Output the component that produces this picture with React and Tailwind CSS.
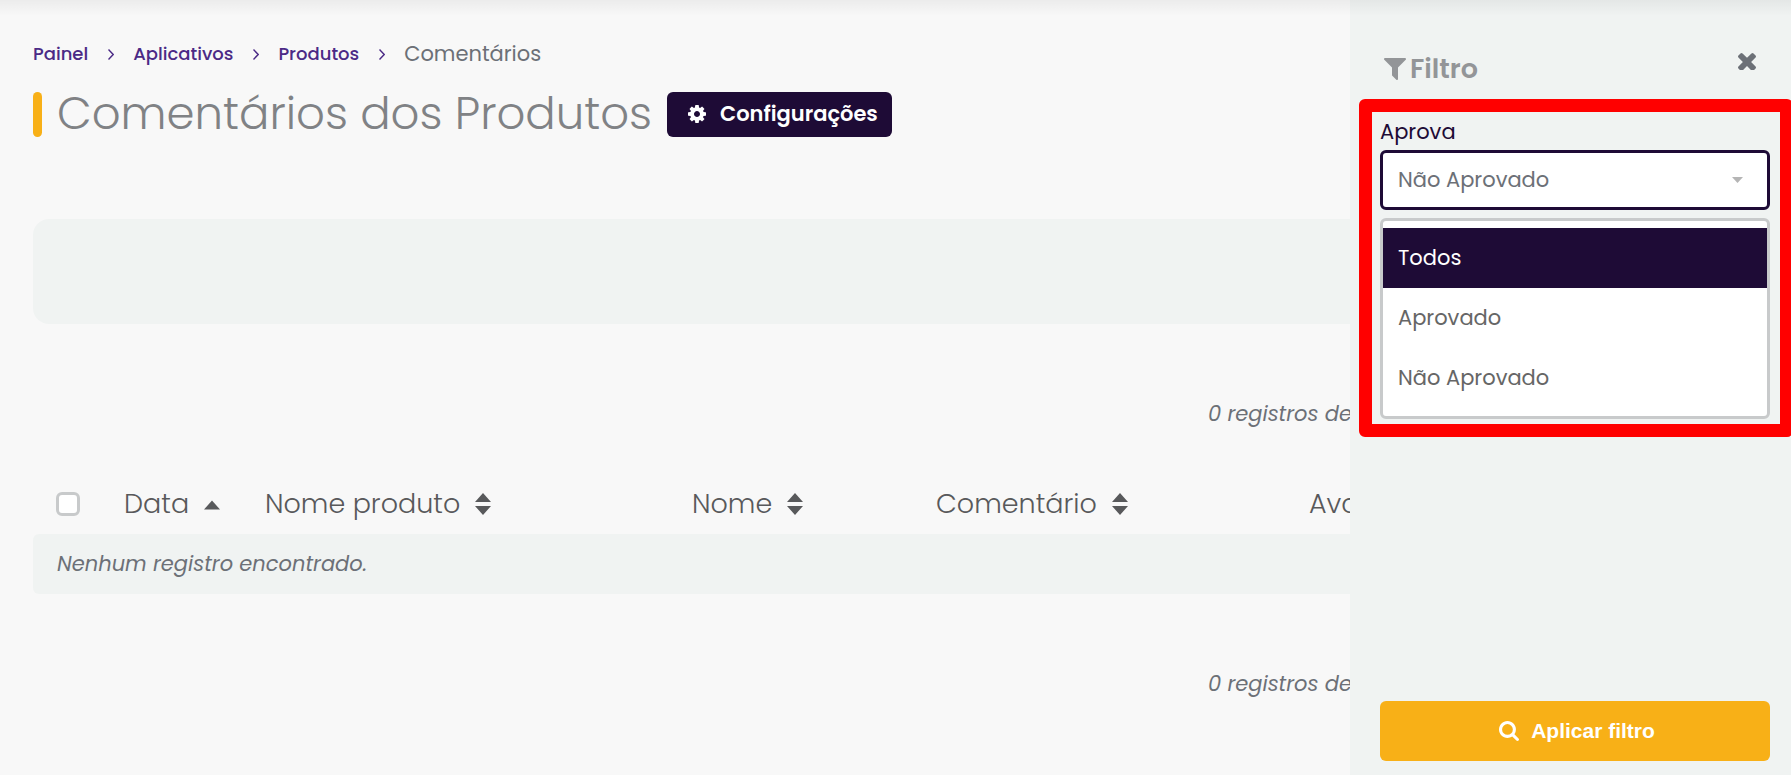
const PATHS = {
  cog: "M1152 896q0-106-75-181t-181-75-181 75-75 181 75 181 181 75 181-75 75-181zm512-109v222q0 12-8 23t-20 13l-185 28q-19 54-39 91 35 50 107 138 10 12 10 25t-9 23q-27 37-99 108t-94 71q-12 0-26-9l-138-108q-44 23-91 38-16 136-29 186-7 28-36 28h-222q-14 0-24.5-8.5t-11.5-21.5l-28-184q-49-16-90-37l-141 107q-10 9-25 9-14 0-25-11-126-114-165-168-7-10-7-23 0-12 8-23 15-21 51-66.5t54-70.5q-27-50-41-99l-183-27q-13-2-21-12.5t-8-23.5v-222q0-12 8-23t19-13l186-28q14-46 39-92-40-57-107-138-10-12-10-24 0-10 9-23 26-36 98.5-107.5t94.5-71.5q13 0 26 10l138 107q44-23 91-38 16-136 29-186 7-28 36-28h222q14 0 24.5 8.5t11.5 21.5l28 184q49 16 90 37l142-107q9-9 24-9 13 0 25 10 129 119 165 170 7 8 7 22 0 12-8 23-15 21-51 66.5t-54 70.5q26 50 41 98l183 28q13 2 21 12.5t8 23.5z",
  filter: "M1595 295q17 41-14 70l-493 493v742q0 42-39 59-13 5-25 5-27 0-45-19l-256-256q-19-19-19-45v-486l-493-493q-31-29-14-70 17-39 59-39h1280q42 0 59 39z",
  times: "M1490 1322q0 40-28 68l-136 136q-28 28-68 28t-68-28l-294-294-294 294q-28 28-68 28t-68-28l-136-136q-28-28-28-68t28-68l294-294-294-294q-28-28-28-68t28-68l136-136q28-28 68-28t68 28l294 294 294-294q28-28 68-28t68 28l136 136q28 28 28 68t-28 68l-294 294 294 294q28 28 28 68z",
  search: "M1216 832q0-185-131.5-316.5t-316.5-131.5-316.5 131.5-131.5 316.5 131.5 316.5 316.5 131.5 316.5-131.5 131.5-316.5zm512 832q0 52-38 90t-90 38q-54 0-90-38l-343-342q-179 124-399 124-143 0-273.5-55.5t-225-150-150-225-55.5-273.5 55.5-273.5 150-225 225-150 273.5-55.5 273.5 55.5 225 150 150 225 55.5 273.5q0 220-124 399l343 343q37 37 37 90z",
};

function Icon({ name, viewBox, className }) {
  return (
    <svg aria-hidden="true" viewBox={viewBox} className={className} fill="currentColor">
      <path d={PATHS[name]} />
    </svg>
  );
}

function Chevron() {
  return (
    <svg aria-hidden="true" viewBox="0 0 6 11" className="h-[11px] w-[6px] text-[#4b2a86]" fill="none" stroke="currentColor" strokeWidth="1.4">
      <path d="M0.5 0.6 5.2 5.5 0.5 10.4" />
    </svg>
  );
}

function SortIcon({ active }) {
  return (
    <svg aria-hidden="true" viewBox="0 0 16 22" className="h-[22px] w-4" fill="currentColor">
      <path d={active ? "M8 7.5 16 16.500H0z" : "M8 0 16 9H0zM8 22 0 13h16z"} />
    </svg>
  );
}

const CRUMBS = ["Painel", "Aplicativos", "Produtos"];

const COLUMNS = [
  { label: "Data", width: "w-[141px]", active: true },
  { label: "Nome produto", width: "w-[427px]" },
  { label: "Nome", width: "w-[244px]" },
  { label: "Comentário", width: "w-[373px]" },
  { label: "Avaliação", width: "w-auto" },
];

function RecordCount() {
  return <p className="pl-[1175px] text-[21px] leading-[30px] whitespace-nowrap italic text-[#6c7077]">0 registros de 0</p>;
}

function Main() {
  return (
    <main className="min-w-0 flex-1 overflow-hidden pl-[33px]">
      <nav aria-label="Breadcrumb" className="pt-10">
        <ol className="flex h-7 items-center gap-[19px]">
          {CRUMBS.map((c) => (
            <li key={c} className="flex items-center gap-5">
              <a href="#" className="text-lg font-medium text-[#4b2a86]">{c}</a>
              <Chevron />
            </li>
          ))}
          <li className="text-[21px] text-[#6c7077]" aria-current="page">Comentários</li>
        </ol>
      </nav>

      <header className="mt-6 flex h-[45px] items-center">
        <span className="h-full w-[9px] rounded-full bg-[#f8b017]" />
        <h1 className="ml-[15px] pb-[2px] text-[45px] leading-[42px] font-light whitespace-nowrap text-[#808285]">Comentários dos Produtos</h1>
        <button type="button" className="ml-[15px] flex h-full items-center gap-[14px] rounded-md bg-[#1e0b36] pr-[14px] pb-[2px] pl-[21px] text-[21px] font-semibold whitespace-nowrap text-white">
          <Icon name="cog" viewBox="128 128 1536 1536" className="size-[18px]" />
          Configurações
        </button>
      </header>

      <div className="mt-[82px] h-[105px] w-[1725px] rounded-2xl bg-[#f0f3f2]" />

      <div className="mt-[75px]"><RecordCount /></div>

      <table className="mt-[45px] w-[1725px] table-fixed text-[#58595b]">
        <thead>
          <tr className="h-[60px]">
            <th scope="col" className="w-[91px] pl-[23px] text-left">
              <input type="checkbox" aria-label="Selecionar todos" className="block size-6 appearance-none rounded-md border-3 border-[#c8cacb] bg-white checked:bg-[#1e0b36]" />
            </th>
            {COLUMNS.map((c) => (
              <th key={c.label} scope="col" aria-sort={c.active ? "ascending" : undefined} className={c.width}>
                <button type="button" className="flex items-center gap-[15px] text-[27px] leading-8 font-light whitespace-nowrap">
                  {c.label}
                  <SortIcon active={c.active} />
                </button>
              </th>
            ))}
          </tr>
        </thead>
        <tbody>
          <tr className="h-[60px] text-[21px] italic text-[#6c7077]">
            <td colSpan={6} className="rounded-md bg-[#f0f3f2] pl-6">Nenhum registro encontrado.</td>
          </tr>
        </tbody>
      </table>

      <div className="mt-[75px]"><RecordCount /></div>
    </main>
  );
}

function FilterPanel() {
  const options = ["Todos", "Aprovado", "Não Aprovado"];
  return (
    <aside className="flex w-[441px] shrink-0 flex-col bg-[#f0f3f2] pr-[21px] pb-[14px] pl-[30px]">
      <div className="flex justify-between pt-[52px] pr-[14px] pl-1">
        <h2 className="flex h-[34px] items-center gap-1 text-[27px] font-semibold text-[#939598]">
          <Icon name="filter" viewBox="192 256 1408 1408" className="size-[22px]" />
          Filtro
        </h2>
        <button type="button" aria-label="Fechar" className="size-[18px] text-[#6c7077]">
          <Icon name="times" viewBox="302 302 1188 1188" className="size-[18px]" />
        </button>
      </div>

      <div className="relative mt-[31px]">
        <label htmlFor="aprova" className="block h-[33px] text-[21px] leading-[30px] text-[#1e0b36]">Aprova</label>
        <div className="grid items-center">
          <select id="aprova" defaultValue="Não Aprovado" className="col-start-1 row-start-1 h-[60px] w-full appearance-none rounded-md border-3 border-[#1e0b36] bg-white px-[15px] text-[21px] text-[#6c7077]">
            {options.map((o) => <option key={o}>{o}</option>)}
          </select>
          <svg aria-hidden="true" viewBox="0 0 11 6" className="pointer-events-none col-start-1 row-start-1 mr-[27px] h-[6px] w-[11px] justify-self-end text-[#b5b5b5]" fill="currentColor">
            <path d="M0 0h11L5.500 6z" />
          </svg>
        </div>
        <ul role="listbox" aria-label="Aprova" className="mt-2 rounded-md border-3 border-[#c8cacb] bg-white pt-[7px] pb-2 text-[21px] text-[#666]">
          {options.map((o) => (
            <li key={o} role="option" aria-selected={o === "Todos"} className="flex h-[60px] items-center px-[15px] aria-selected:bg-[#1e0b36] aria-selected:text-white">{o}</li>
          ))}
        </ul>
        <div className="pointer-events-none absolute -top-[18px] -right-[23px] -bottom-[18px] -left-[21px] rounded-md border-13 border-[#ff0000]" />
      </div>

      <button type="submit" className="mt-auto flex h-[60px] items-center justify-center gap-3 rounded-md bg-[#f8b017] pl-1 font-['Liberation_Sans',Arial,sans-serif] text-[21px] font-bold text-white">
        <Icon name="search" viewBox="64 128 1664 1664" className="size-[20px]" />
        Aplicar filtro
      </button>
    </aside>
  );
}

export default function App() {
  return (
    <div className="relative flex h-screen overflow-hidden bg-[#f8f8f8] font-['Poppins','Inter',sans-serif]">
      <Main />
      <FilterPanel />
      <div className="pointer-events-none absolute inset-x-0 top-0 h-4 bg-linear-to-b from-black/5 to-transparent" />
    </div>
  );
}
